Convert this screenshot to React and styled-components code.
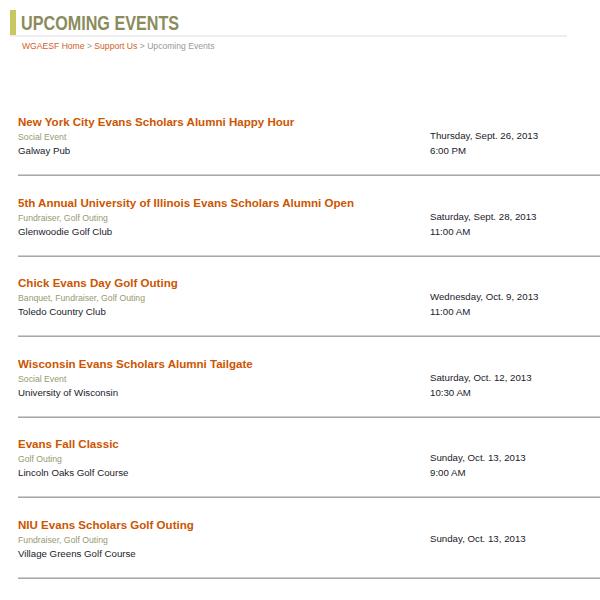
import React from "react";
import styled, { createGlobalStyle } from "styled-components";

const Global = createGlobalStyle`
  html, body { margin: 0; padding: 0; background: #fff; }
  body { font-family: "Liberation Sans", Arial, sans-serif; }
`;

const Page = styled.div`
  width: 600px;
  padding: 10px 0 0 10px;
  box-sizing: border-box;
`;

const HeadingRow = styled.div`
  display: flex;
  align-items: stretch;
  width: 557px;
  border-bottom: 2px solid #eeeeee;
`;

const Accent = styled.div`
  width: 6px;
  background: #c8c860;
`;

const Heading = styled.h1`
  margin: 0;
  padding: 0 0 0 5px;
  font-family: "Liberation Sans", Arial, sans-serif;
  font-weight: bold;
  font-size: 21px;
  line-height: 25px;
  color: #8b8b5c;
  transform: scaleX(0.77);
  transform-origin: 5px 0;
  white-space: nowrap;
`;

const Crumbs = styled.div`
  margin: 3px 0 0 12px;
  font-size: 8.6px;
  line-height: 12px;
  color: #999999;
`;

const CrumbLink = styled.span`
  color: #d0602a;
`;

const List = styled.div`
  margin: 62px 0 0 8px;
  display: flex;
  flex-direction: column;
`;

const Event = styled.div`
  display: grid;
  grid-template-columns: 412px 1fr;
  padding: 0 0 17px;
  margin-bottom: 18.5px;
  border-bottom: 1px solid #a8a8a8;
  box-shadow: 0 -1px 0 #cfcfcf inset;
`;

const Left = styled.div`
  display: flex;
  flex-direction: column;
`;

const Title = styled.div`
  font-size: 11.55px;
  font-weight: bold;
  line-height: 16px;
  color: #cc5500;
`;

const Category = styled.div`
  font-size: 8.7px;
  line-height: 14px;
  color: #999970;
`;

const Place = styled.div`
  font-size: 9.7px;
  line-height: 14px;
  color: #1a1a2a;
`;

const Right = styled.div`
  padding-top: 14px;
  display: flex;
  flex-direction: column;
`;

const When = styled.div`
  font-size: 9.7px;
  line-height: 15px;
  color: #1a1a2a;
`;

const events = [
  { title: "New York City Evans Scholars Alumni Happy Hour", cat: "Social Event", place: "Galway Pub", date: "Thursday, Sept. 26, 2013", time: "6:00 PM" },
  { title: "5th Annual University of Illinois Evans Scholars Alumni Open", cat: "Fundraiser, Golf Outing", place: "Glenwoodie Golf Club", date: "Saturday, Sept. 28, 2013", time: "11:00 AM" },
  { title: "Chick Evans Day Golf Outing", cat: "Banquet, Fundraiser, Golf Outing", place: "Toledo Country Club", date: "Wednesday, Oct. 9, 2013", time: "11:00 AM" },
  { title: "Wisconsin Evans Scholars Alumni Tailgate", cat: "Social Event", place: "University of Wisconsin", date: "Saturday, Oct. 12, 2013", time: "10:30 AM" },
  { title: "Evans Fall Classic", cat: "Golf Outing", place: "Lincoln Oaks Golf Course", date: "Sunday, Oct. 13, 2013", time: "9:00 AM" },
  { title: "NIU Evans Scholars Golf Outing", cat: "Fundraiser, Golf Outing", place: "Village Greens Golf Course", date: "Sunday, Oct. 13, 2013", time: "" },
];

export default function App() {
  return (
    <Page>
      <Global />
      <HeadingRow>
        <Accent />
        <Heading>UPCOMING EVENTS</Heading>
      </HeadingRow>
      <Crumbs>
        <CrumbLink>WGAESF Home</CrumbLink> &gt; <CrumbLink>Support Us</CrumbLink> &gt; Upcoming Events
      </Crumbs>
      <List>
        {events.map((e) => (
          <Event key={e.title}>
            <Left>
              <Title>{e.title}</Title>
              <Category>{e.cat}</Category>
              <Place>{e.place}</Place>
            </Left>
            <Right>
              <When>{e.date}</When>
              <When>{e.time}</When>
            </Right>
          </Event>
        ))}
      </List>
    </Page>
  );
}
